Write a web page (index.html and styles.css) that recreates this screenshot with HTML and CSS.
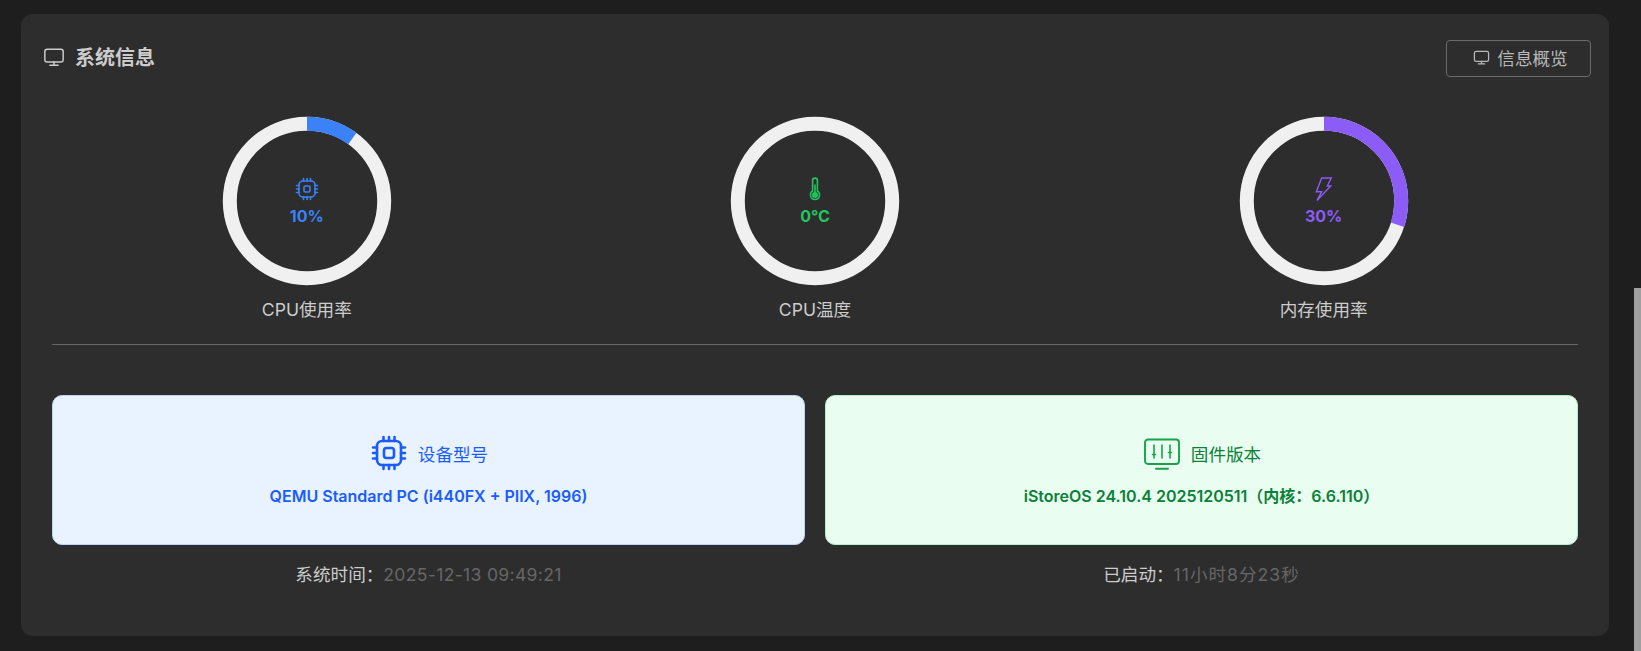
FILE: index.html
```html
<!DOCTYPE html>
<html lang="zh-CN">
<head>
    <meta charset="UTF-8">
    <meta name="viewport" content="width=device-width, initial-scale=1.0">
    <title>系统信息</title>
    <link rel="stylesheet" href="styles.css">
</head>
<body>
    <div class="card">
        <div class="card-header">
            <div class="card-title">
                <svg class="title-icon" viewBox="0 0 24 24" fill="none" stroke="currentColor" stroke-width="1.6" stroke-linecap="round" stroke-linejoin="round">
                    <rect x="2" y="3.5" width="20" height="14" rx="2.5"/>
                    <path d="M12 17.5v3.5M7.5 21h9"/>
                </svg>
                <span>系统信息</span>
            </div>
            <button class="overview-btn" type="button">
                <svg class="btn-icon" viewBox="0 0 24 24" fill="none" stroke="currentColor" stroke-width="1.8" stroke-linecap="round" stroke-linejoin="round">
                    <rect x="2" y="3.5" width="20" height="14" rx="2.5"/>
                    <path d="M12 17.5v3.5M7.5 21h9"/>
                </svg>
                <span>信息概览</span>
            </button>
        </div>

        <div class="gauges">
            <div class="gauge">
                <div class="ring">
                    <svg class="ring-svg" viewBox="0 0 170 170">
                        <circle class="ring-track" cx="85" cy="85" r="77.2"/>
                        <circle class="ring-value blue" cx="85" cy="85" r="77.2" pathLength="100" stroke-dasharray="10 90"/>
                    </svg>
                    <div class="ring-center blue-text">
                        <svg class="ring-icon" viewBox="0 0 24 24" fill="none" stroke="currentColor" stroke-width="1.6" stroke-linecap="round" stroke-linejoin="round">
                            <rect x="4" y="4" width="16" height="16" rx="4"/>
                            <rect x="9" y="9" width="6" height="6" rx="1.5"/>
                            <path d="M8.5 1.5V4M12 1.5V4M15.5 1.5V4M8.5 20v2.5M12 20v2.5M15.5 20v2.5M1.5 8.5H4M1.5 12H4M1.5 15.5H4M20 8.5h2.5M20 12h2.5M20 15.5h2.5"/>
                        </svg>
                        <span class="ring-num">10%</span>
                    </div>
                </div>
                <div class="gauge-label">CPU使用率</div>
            </div>

            <div class="gauge">
                <div class="ring">
                    <svg class="ring-svg" viewBox="0 0 170 170">
                        <circle class="ring-track" cx="85" cy="85" r="77.2"/>
                    </svg>
                    <div class="ring-center green-text">
                        <svg class="ring-icon" viewBox="0 0 24 24" fill="none" stroke="currentColor" stroke-width="1.6" stroke-linecap="round" stroke-linejoin="round">
                            <path d="M9.6 14V3.5a2.4 2.4 0 0 1 4.8 0V14a4.6 4.6 0 1 1-4.8 0z"/>
                            <circle cx="12" cy="18" r="2.2" fill="currentColor"/>
                            <path d="M12 8v8"/>
                        </svg>
                        <span class="ring-num">0℃</span>
                    </div>
                </div>
                <div class="gauge-label">CPU温度</div>
            </div>

            <div class="gauge">
                <div class="ring">
                    <svg class="ring-svg" viewBox="0 0 170 170">
                        <circle class="ring-track" cx="85" cy="85" r="77.2"/>
                        <circle class="ring-value purple" cx="85" cy="85" r="77.2" pathLength="100" stroke-dasharray="30 70"/>
                    </svg>
                    <div class="ring-center purple-text">
                        <svg class="ring-icon" viewBox="0 0 24 24" fill="none" stroke="currentColor" stroke-width="1.4" stroke-linejoin="miter">
                            <path d="M9.7 1h9.6l-4 8h3.4L5 23.5l4.7-8.8H4.3z"/>
                        </svg>
                        <span class="ring-num">30%</span>
                    </div>
                </div>
                <div class="gauge-label">内存使用率</div>
            </div>
        </div>

        <hr class="divider">

        <div class="info-grid">
            <div class="info-col">
                <div class="info-box info-blue">
                    <div class="info-head">
                        <svg class="info-icon" viewBox="0 0 36 36" fill="none" stroke="currentColor" stroke-width="2.6" stroke-linecap="round" stroke-linejoin="round">
                            <rect x="6" y="6" width="24" height="24" rx="5"/>
                            <rect x="13" y="13" width="10" height="10" rx="2.5"/>
                            <path d="M12.5 2v4M18 2v4M23.5 2v4M12.5 30v4M18 30v4M23.5 30v4M2 12.5h4M2 18h4M2 23.5h4M30 12.5h4M30 18h4M30 23.5h4"/>
                        </svg>
                        <span>设备型号</span>
                    </div>
                    <div class="info-value">QEMU Standard PC (i440FX + PIIX, 1996)</div>
                </div>
                <div class="info-foot">系统时间：<span class="foot-value">2025-12-13 09:49:21</span></div>
            </div>
            <div class="info-col">
                <div class="info-box info-green">
                    <div class="info-head">
                        <svg class="info-icon firmware-icon" viewBox="0 0 36 36" fill="none" stroke="currentColor" stroke-width="1.9" stroke-linecap="round" stroke-linejoin="round">
                            <rect x="1" y="4.5" width="34" height="24.5" rx="3"/>
                            <path d="M12 33.8h12"/>
                            <path d="M10 10v13M18 10v13M26 10v13" stroke-width="1.6"/>
                            <path d="M8.5 19.5h3M24.5 17.5h3" stroke-width="1.6"/>
                        </svg>
                        <span>固件版本</span>
                    </div>
                    <div class="info-value">iStoreOS 24.10.4 2025120511（内核：6.6.110）</div>
                </div>
                <div class="info-foot">已启动：<span class="foot-value uptime">11小时8分23秒</span></div>
            </div>
        </div>
    </div>
    <div class="scroll-thumb"></div>
</body>
</html>
```

FILE: styles.css
```css
html, body {
    height: 100%;
    overflow: hidden;
}
body {
    margin: 0;
    padding: 14px 32px 0 21px;
    box-sizing: border-box;
    background-color: #1e1e1e;
    color: #cccccc;
    font-family: Inter, "Noto Sans CJK SC", sans-serif;
    font-size: 16px;
}
.card {
    background: #2d2d2d;
    border-radius: 12px;
    padding: 24px 31px 0;
    height: 622px;
    box-sizing: border-box;
}
.card-header {
    display: flex;
    justify-content: space-between;
    align-items: flex-start;
    margin: 0 -13px 0 -9px;
    height: 38px;
}
.card-title {
    display: flex;
    align-items: center;
    gap: 10px;
    height: 36px;
    font-size: 20px;
    font-weight: 700;
    color: #cccccc;
}
.title-icon {
    width: 22px;
    height: 22px;
    margin-top: 2px;
}
.overview-btn {
    display: flex;
    align-items: center;
    justify-content: center;
    gap: 7px;
    width: 145px;
    height: 37px;
    padding: 0 0 2px 4px;
    margin-top: 2px;
    background: transparent;
    border: 1px solid #6b6b6b;
    border-radius: 4px;
    color: #b8b8b8;
    font-family: inherit;
    font-size: 17.6px;
}
.btn-icon {
    width: 17px;
    height: 17px;
}
.gauges {
    display: grid;
    grid-template-columns: repeat(3, 1fr);
    margin-top: 40px;
}
.gauge {
    display: flex;
    flex-direction: column;
    align-items: center;
}
.gauge:first-child {
    padding-left: 1px;
}
.ring {
    position: relative;
    width: 170px;
    height: 170px;
}
.ring-svg {
    display: block;
    width: 170px;
    height: 170px;
    transform: rotate(-90deg);
}
.ring-track, .ring-value {
    fill: none;
    stroke-width: 14;
}
.ring-track {
    stroke: #f0f0f0;
}
.blue {
    stroke: #3b82f6;
}
.purple {
    stroke: #8b5cf6;
}
.blue-text {
    color: #3b82f6;
}
.green-text {
    color: #22c55e;
}
.purple-text {
    color: #8b5cf6;
}
.ring-center {
    position: absolute;
    inset: 0;
    display: flex;
    flex-direction: column;
    align-items: center;
    justify-content: center;
    gap: 5px;
}
.ring-icon {
    width: 24px;
    height: 24px;
}
.ring-num {
    font-size: 16px;
    font-weight: 700;
    line-height: 20px;
}
.gauge-label {
    margin-top: 12px;
    font-size: 17.6px;
    line-height: 24px;
    color: #cccccc;
}
.divider {
    border: 0;
    border-top: 1px solid #666666;
    margin: 22px 0 0;
}
.info-grid {
    display: grid;
    grid-template-columns: 1fr 1fr;
    gap: 20px;
    margin-top: 50px;
}
.info-box {
    height: 150px;
    box-sizing: border-box;
    padding-top: 3px;
    border-radius: 10px;
    border: 1px solid;
    display: flex;
    flex-direction: column;
    align-items: center;
    justify-content: center;
}
.info-blue {
    background: #e8f3ff;
    border-color: #b9d3f5;
    color: #1a5cff;
}
.info-green {
    background: #e9fdf0;
    border-color: #b4efc9;
    color: #0a8138;
}
.info-head {
    display: flex;
    align-items: center;
    gap: 11px;
    margin-left: 2px;
    font-size: 17.6px;
}
.info-icon {
    width: 36px;
    height: 36px;
}
.firmware-icon {
    color: #16a34a;
}
.info-value {
    margin-top: 13px;
    font-size: 16px;
    font-weight: 600;
    line-height: 24px;
}
.info-foot {
    margin-top: 18px;
    text-align: center;
    font-size: 17.6px;
    line-height: 24px;
    color: #cccccc;
}
.foot-value {
    color: #666666;
    letter-spacing: 0.3px;
}
.uptime {
    letter-spacing: 1px;
}
.scroll-thumb {
    position: fixed;
    right: 0;
    top: 288px;
    bottom: 0;
    width: 7px;
    background: #a0a0a0;
}
```
